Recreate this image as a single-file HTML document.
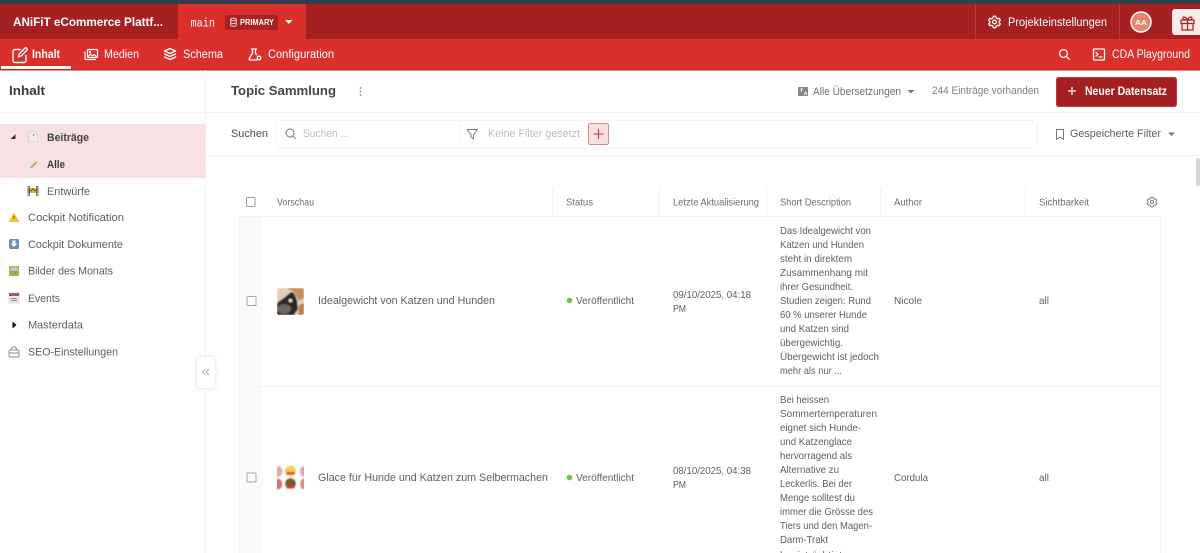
<!DOCTYPE html>
<html lang="de">
<head>
<meta charset="utf-8">
<title>Topic Sammlung</title>
<style>
html,body{margin:0;padding:0;width:1200px;height:553px;overflow:hidden;background:#fff}
svg{display:block;filter:blur(.3px)}
text{font-family:"Liberation Sans",sans-serif;font-size:11px;fill:#5e5e5e}
.w{fill:#fff;font-size:11.5px}
.b{font-weight:700}
.s{font-size:10.5px;fill:#6e6e6e}
.d{fill:#5e5e5e;font-size:10.5px}
.n{fill:#5e5e5e;font-size:11px}
.ic{fill:none;stroke:#fff;stroke-width:1.3;stroke-linecap:round;stroke-linejoin:round}
.g{fill:none;stroke:#777;stroke-width:1;stroke-linecap:round;stroke-linejoin:round}
</style>
</head>
<body>
<svg width="1200" height="553" viewBox="0 0 1200 553" xmlns="http://www.w3.org/2000/svg">
<defs>
<clipPath id="t1"><rect x="277" y="288" width="27" height="27" rx="2"/></clipPath>
<clipPath id="t2"><rect x="277" y="465" width="27" height="25"/></clipPath>
<filter id="sh" x="-50%" y="-50%" width="200%" height="200%"><feDropShadow dx="0" dy="0" stdDeviation="2" flood-color="#000" flood-opacity=".14"/></filter>
<filter id="bl"><feGaussianBlur stdDeviation=".7"/></filter>
</defs>

<!-- top bars -->
<rect width="1200" height="4" fill="#363d4b"/>
<rect y="4" width="1200" height="35" fill="#a52121"/>
<rect x="178" y="4" width="128" height="35" fill="#db2f2c"/>
<rect y="39" width="1200" height="30" fill="#db2f2c"/>
<rect y="69" width="1200" height="1.500" fill="#c62222"/>
<rect x="975" y="4" width="1" height="35" fill="#b83a38"/>
<rect x="1119" y="4" width="1" height="35" fill="#b83a38"/>
<text x="13" y="26" class="w b" style="font-size:12px" textLength="150" lengthAdjust="spacingAndGlyphs">ANiFiT eCommerce Plattf...</text>
<text x="190.500" y="26.500" style="font-family:'Liberation Mono',monospace;font-size:11.500px;fill:#fff" textLength="24.500" lengthAdjust="spacingAndGlyphs">main</text>
<rect x="225" y="15" width="53" height="15" rx="2" fill="#a82222"/>
<g fill="none" stroke="#f4d0d0" stroke-width="1"><ellipse cx="233.500" cy="19.500" rx="2.800" ry="1.200"/><path d="M230.700 19.500v5.500c0 .8 1.300 1.300 2.800 1.300s2.800-.5 2.800-1.300v-5.500M230.700 22.300c0 .8 1.300 1.300 2.800 1.300s2.800-.5 2.800-1.300"/></g>
<text x="240" y="25" class="w b" style="font-size:8px" textLength="34" lengthAdjust="spacingAndGlyphs">PRIMARY</text>
<path d="M285 20h7.500l-3.750 4z" fill="#fff"/>

<!-- nav -->
<g class="ic" style="stroke-width:1.400">
<path d="M20 49.500h-5a2 2 0 0 0-2 2v9a2 2 0 0 0 2 2h9a2 2 0 0 0 2-2v-5"/>
<path d="M18.500 56.800l.6-2.800 5.700-5.700a1.400 1.400 0 0 1 2 2l-5.600 5.700z"/>
</g>
<text x="32" y="58" class="w b" textLength="28" lengthAdjust="spacingAndGlyphs">Inhalt</text>
<rect x="1" y="66" width="70" height="3" fill="#fff"/>
<g class="ic" style="stroke-width:1.200">
<rect x="87.500" y="49.500" width="10" height="8" rx="1"/>
<path d="M85 52v6.500a1 1 0 0 0 1 1h9.500M88 57l2.500-3 2 2 1.500-1.500 3 2.500"/>
<circle cx="90" cy="52" r=".6"/>
</g>
<text x="104" y="58" class="w" textLength="35" lengthAdjust="spacingAndGlyphs">Medien</text>
<g class="ic" style="stroke-width:1.400">
<path d="M170 48.500l5.500 2.500-5.500 2.500-5.500-2.500zM164.500 54l5.500 2.500 5.500-2.500M164.500 57l5.500 2.500 5.500-2.500"/>
</g>
<text x="183" y="58" class="w" textLength="40" lengthAdjust="spacingAndGlyphs">Schema</text>
<g class="ic" style="stroke-width:1.300">
<path d="M251.500 49h5M252.500 49v4l-3.200 5.500a1 1 0 0 0 .9 1.500h6.300M255.500 49v4l1 1.800"/>
<circle cx="259" cy="58" r="1.800"/>
</g>
<text x="268" y="58" class="w" textLength="66" lengthAdjust="spacingAndGlyphs">Configuration</text>

<!-- top right -->
<g class="ic" style="stroke-width:1.300">
<circle cx="994.500" cy="22" r="1.900"/>
<path d="M993.300 16.300h2.400l.4 1.600 1.400.8 1.600-.5 1.200 2-1.200 1.200v1.200l1.200 1.200-1.200 2-1.600-.5-1.400.8-.4 1.600h-2.400l-.4-1.600-1.400-.8-1.600.5-1.200-2 1.200-1.200v-1.200l-1.200-1.200 1.200-2 1.600.5 1.400-.8z"/>
</g>
<text x="1008" y="25.800" class="w" textLength="99" lengthAdjust="spacingAndGlyphs">Projekteinstellungen</text>
<circle cx="1141" cy="22" r="10" fill="#e9846d" stroke="#fff" stroke-width="1.500"/>
<text x="1135" y="25" class="w b" style="font-size:7.500px" textLength="12" lengthAdjust="spacingAndGlyphs">AA</text>
<path d="M1200 9h-25a3 3 0 0 0-3 3v20a3 3 0 0 0 3 3h25z" fill="#fbeae8"/>
<g fill="none" stroke="#a52121" stroke-width="1.200" stroke-linejoin="round" stroke-linecap="round">
<rect x="1181" y="20" width="13" height="3.500"/>
<path d="M1182 23.500v6.500h11v-6.500M1187.500 20v10M1187.500 20c-2-4-5-3.500-4.500-1.500.2 1 2.500 1.500 4.500 1.500zM1187.500 20c2-4 5-3.500 4.500-1.500-.2 1-2.500 1.500-4.500 1.500z"/>
</g>
<g class="ic" style="stroke-width:1.300"><circle cx="1063.500" cy="53.500" r="3.900"/><path d="M1066.400 56.400l2.900 2.900"/></g>
<g class="ic" style="stroke-width:1.300"><rect x="1093.500" y="49" width="11" height="11" rx="1"/><path d="M1096 52.500l2 1.800-2 1.800M1099 57h3"/></g>
<text x="1112" y="58" class="w" textLength="78" lengthAdjust="spacingAndGlyphs">CDA Playground</text>

<!-- sidebar -->
<rect x="205" y="70" width="1" height="483" fill="#f2f2f2"/>
<text x="9" y="95" style="font-size:12.500px;font-weight:700;fill:#3a3a3a" textLength="36" lengthAdjust="spacingAndGlyphs">Inhalt</text>
<rect x="0" y="112" width="205" height="1" fill="#f4f4f4"/>
<rect x="0" y="124" width="205.500" height="54" fill="#f7e1e4"/>
<path d="M15.500 134.200v4.800h-5z" fill="#333"/>
<path d="M28.500 131.500h6l3 3v7h-9z" fill="#eeeef0" stroke="#c9c9d0" stroke-width=".6"/>
<path d="M33 134l2 1-2 1z" fill="#778"/>
<text x="47" y="140.800" class="b" style="fill:#444" textLength="42" lengthAdjust="spacingAndGlyphs">Beiträge</text>
<rect x="28.500" y="159" width="8" height="9" fill="#e3e3e3"/>
<path d="M30 167.500l6-6 1.500 1-6 5.500z" fill="#b9a83e"/>
<text x="47" y="167.800" class="b" style="fill:#3d3d3d" textLength="18" lengthAdjust="spacingAndGlyphs">Alle</text>
<g><rect x="28" y="188" width="10" height="5" fill="#d9b53a"/><path d="M28 186.500h1.500v9H28zM36.500 186.500H38v9h-1.500zM29 189l2 2 2-2 2 2 2-2" fill="none" stroke="#555" stroke-width=".8"/></g>
<text x="47" y="194.800" textLength="43" lengthAdjust="spacingAndGlyphs">Entwürfe</text>
<path d="M14 212.500l5.500 9.500h-11z" fill="#f4c430"/><path d="M14 216v3" stroke="#6b5200" stroke-width="1"/>
<text x="28" y="221" textLength="96" lengthAdjust="spacingAndGlyphs">Cockpit Notification</text>
<rect x="9" y="239" width="10" height="10" rx="1.500" fill="#6f8fb8"/><path d="M12.500 240.500h3v3h1.700L14 247l-3.200-3.500h1.700z" fill="#fff"/>
<text x="28" y="248" textLength="95" lengthAdjust="spacingAndGlyphs">Cockpit Dokumente</text>
<rect x="9" y="266" width="10" height="10" fill="#d6a737"/><rect x="10.500" y="267.500" width="7" height="3.500" fill="#a8d0e0"/><rect x="10.500" y="271" width="7" height="3.500" fill="#7fb36a"/>
<text x="28" y="274.700" textLength="85" lengthAdjust="spacingAndGlyphs">Bilder des Monats</text>
<rect x="9" y="293" width="10" height="10" fill="#ececec" stroke="#bbb" stroke-width=".5"/><rect x="9" y="293" width="10" height="3" fill="#a55a5a"/><path d="M11 298.500h6M11 300.500h6" stroke="#666" stroke-width=".8"/>
<text x="28" y="301.800" textLength="32" lengthAdjust="spacingAndGlyphs">Events</text>
<path d="M12.500 321.500l4 3.500-4 3.500z" fill="#111"/>
<text x="28" y="328.700" textLength="55" lengthAdjust="spacingAndGlyphs">Masterdata</text>
<g fill="none" stroke="#888" stroke-width=".9"><rect x="9" y="350" width="10" height="7" rx="1"/><path d="M11 350l1.500-3h3l1.500 3M9 353h10"/></g>
<text x="28" y="355.300" textLength="90" lengthAdjust="spacingAndGlyphs">SEO-Einstellungen</text>
<rect x="197" y="357" width="18" height="31" rx="3" fill="#fff" filter="url(#sh)"/>
<path d="M205.500 369l-2.800 3 2.800 3M209 369l-2.800 3 2.800 3" fill="none" stroke="#999" stroke-width=".9"/>

<!-- title row -->
<text x="231" y="95" style="font-size:12.500px;font-weight:700;fill:#444" textLength="105" lengthAdjust="spacingAndGlyphs">Topic Sammlung</text>
<g fill="#888"><circle cx="360.500" cy="88" r=".9"/><circle cx="360.500" cy="91.500" r=".9"/><circle cx="360.500" cy="95" r=".9"/></g>
<rect x="798" y="87" width="10" height="9" fill="#888"/><path d="M800 89h3M801.500 89v3M804 95l1.500-3 1.500 3" fill="none" stroke="#fff" stroke-width=".8"/>
<text x="813" y="95" class="s" style="font-size:11px" textLength="88" lengthAdjust="spacingAndGlyphs">Alle Übersetzungen</text>
<path d="M907.500 90h7l-3.500 3.500z" fill="#777"/>
<text x="932" y="94" class="s" style="font-size:11px;fill:#808080" textLength="107" lengthAdjust="spacingAndGlyphs">244 Einträge vorhanden</text>
<rect x="1056.500" y="77.500" width="120" height="29" rx="2" fill="#a51f22" stroke="#c23a3c"/>
<path d="M1072 87v8M1068 91h8" stroke="#fff" stroke-width="1.200"/>
<text x="1085" y="95" class="w b" textLength="82" lengthAdjust="spacingAndGlyphs">Neuer Datensatz</text>
<rect x="206" y="112" width="994" height="1" fill="#f2f2f2"/>

<!-- search row -->
<text x="231" y="137" style="fill:#4e4e4e" textLength="37" lengthAdjust="spacingAndGlyphs">Suchen</text>
<rect x="276.500" y="120.500" width="761" height="28" rx="3" fill="#fff" stroke="#f4f4f4"/>
<rect x="459" y="121" width="1" height="27" fill="#f4f4f4"/>
<g class="g"><circle cx="290" cy="133" r="4"/><path d="M293 136l2.800 2.800"/></g>
<text x="303" y="137" style="fill:#bdbdbd" textLength="46" lengthAdjust="spacingAndGlyphs">Suchen ...</text>
<path d="M467 129.500h10.500l-4 5v4.500l-2.500-2v-2.500z" class="g"/>
<text x="488" y="137" style="fill:#bdbdbd" textLength="92" lengthAdjust="spacingAndGlyphs">Keine Filter gesetzt</text>
<rect x="588.500" y="123.500" width="20" height="21" rx="2" fill="#f7e0e1" stroke="#d28e90"/>
<path d="M598.500 129v10M593.500 134h10" stroke="#b8393c" stroke-width="1"/>
<path d="M1056.500 129.500h7v10l-3.500-2.500-3.500 2.500z" class="g"/>
<text x="1070" y="137" textLength="91" lengthAdjust="spacingAndGlyphs">Gespeicherte Filter</text>
<path d="M1168 132.500h7l-3.500 3.500z" fill="#777"/>
<rect x="206" y="155" width="994" height="1" fill="#f4f4f4"/>
<rect x="1196" y="158" width="4" height="28" rx="2" fill="#d4d4d4"/>

<!-- table head -->
<rect x="246.500" y="197.500" width="8.500" height="9" rx="1" fill="#fff" stroke="#999"/>
<text x="277" y="205.500" class="s" textLength="37" lengthAdjust="spacingAndGlyphs">Vorschau</text>
<g fill="#f3f3f3"><rect x="552" y="188" width="1" height="28"/><rect x="659" y="188" width="1" height="28"/><rect x="766" y="188" width="1" height="28"/><rect x="880" y="188" width="1" height="28"/><rect x="1025" y="188" width="1" height="28"/></g>
<text x="566" y="205.500" class="s" textLength="27" lengthAdjust="spacingAndGlyphs">Status</text>
<text x="673" y="205.500" class="s" textLength="86" lengthAdjust="spacingAndGlyphs">Letzte Aktualisierung</text>
<text x="780" y="205.500" class="s" textLength="71" lengthAdjust="spacingAndGlyphs">Short Description</text>
<text x="894" y="205.500" class="s" textLength="28" lengthAdjust="spacingAndGlyphs">Author</text>
<text x="1039" y="205.500" class="s" textLength="50" lengthAdjust="spacingAndGlyphs">Sichtbarkeit</text>
<g class="g" style="stroke-width:.9"><circle cx="1152" cy="202" r="1.500"/><path d="M1151 197.200h2l.4 1.300 1.200.7 1.300-.4 1 1.700-1 1v1l1 1-1 1.700-1.300-.4-1.200.7-.4 1.300h-2l-.4-1.300-1.200-.7-1.300.4-1-1.700 1-1v-1l-1-1 1-1.700 1.300.4 1.200-.7z"/></g>

<!-- table body -->
<rect x="239.500" y="216.500" width="921" height="345" fill="#fff" stroke="#f2f2f2"/>
<rect x="240" y="217" width="22" height="336" fill="#fafafa"/>
<rect x="240" y="386" width="920" height="1" fill="#f4f4f4"/>

<!-- row 1 -->
<rect x="247" y="296.500" width="9" height="9" rx="1" fill="#fff" stroke="#a5a5a5"/>
<g clip-path="url(#t1)"><g filter="url(#bl)">
<rect x="277" y="288" width="27" height="27" fill="#e2d2bb"/>
<path d="M287 288h17v10l-5 3-5-9z" fill="#c58e5c"/>
<path d="M277 303l8-6 6-5 3 1 3 7 1 9-4 6h-17z" fill="#2c2826"/>
<ellipse cx="284" cy="309" rx="7" ry="5" fill="#6e665f"/>
<circle cx="290.500" cy="300.500" r="1.800" fill="#eeeae3"/>
<path d="M299 305l5-2v12h-6z" fill="#bd7f50"/>
</g></g>
<text x="318" y="304" class="n" textLength="177" lengthAdjust="spacingAndGlyphs">Idealgewicht von Katzen und Hunden</text>
<circle cx="569.500" cy="300.500" r="2.800" fill="#6cc24a"/>
<text x="576" y="304" class="s" style="fill:#5e5e5e" textLength="58" lengthAdjust="spacingAndGlyphs">Veröffentlicht</text>
<text x="673" y="298" class="d" textLength="78" lengthAdjust="spacingAndGlyphs">09/10/2025, 04:18</text>
<text x="673" y="312" class="d" textLength="13" lengthAdjust="spacingAndGlyphs">PM</text>
<text x="780" y="234" class="d" textLength="91" lengthAdjust="spacingAndGlyphs">Das Idealgewicht von</text>
<text x="780" y="248" class="d" textLength="84" lengthAdjust="spacingAndGlyphs">Katzen und Hunden</text>
<text x="780" y="262" class="d" textLength="72" lengthAdjust="spacingAndGlyphs">steht in direktem</text>
<text x="780" y="276" class="d" textLength="88" lengthAdjust="spacingAndGlyphs">Zusammenhang mit</text>
<text x="780" y="290" class="d" textLength="73" lengthAdjust="spacingAndGlyphs">ihrer Gesundheit.</text>
<text x="780" y="304" class="d" textLength="91" lengthAdjust="spacingAndGlyphs">Studien zeigen: Rund</text>
<text x="780" y="318" class="d" textLength="87" lengthAdjust="spacingAndGlyphs">60 % unserer Hunde</text>
<text x="780" y="332" class="d" textLength="69" lengthAdjust="spacingAndGlyphs">und Katzen sind</text>
<text x="780" y="346" class="d" textLength="63" lengthAdjust="spacingAndGlyphs">übergewichtig.</text>
<text x="780" y="360" class="d" textLength="99" lengthAdjust="spacingAndGlyphs">Übergewicht ist jedoch</text>
<text x="780" y="374" class="d" textLength="62" lengthAdjust="spacingAndGlyphs">mehr als nur ...</text>
<text x="894" y="304" class="d" textLength="28" lengthAdjust="spacingAndGlyphs">Nicole</text>
<text x="1039" y="304" class="d" textLength="10" lengthAdjust="spacingAndGlyphs">all</text>

<!-- row 2 -->
<rect x="247" y="473" width="9" height="9" rx="1" fill="#fff" stroke="#a5a5a5"/>
<g clip-path="url(#t2)"><g filter="url(#bl)">
<rect x="277" y="465" width="27" height="25" fill="#fff"/>
<ellipse cx="278" cy="471.500" rx="4.500" ry="5.500" fill="#e7a6a6"/>
<ellipse cx="278" cy="484" rx="4.500" ry="5.500" fill="#d96e70"/>
<circle cx="290.500" cy="471" r="5.500" fill="#efce4b"/>
<rect x="286" y="472" width="9" height="2.500" fill="#d8434a"/>
<circle cx="290.500" cy="483.500" r="5.500" fill="#7a5a2c"/>
<rect x="286" y="486" width="9" height="2.500" fill="#c83a40"/>
<ellipse cx="303.500" cy="471.500" rx="3.500" ry="5.500" fill="#e6a2a2"/>
<ellipse cx="303.500" cy="484" rx="3.500" ry="5.500" fill="#d98a8a"/>
</g></g>
<text x="318" y="481" class="n" textLength="230" lengthAdjust="spacingAndGlyphs">Glace für Hunde und Katzen zum Selbermachen</text>
<circle cx="569.500" cy="477.500" r="2.800" fill="#6cc24a"/>
<text x="576" y="481" class="s" style="fill:#5e5e5e" textLength="58" lengthAdjust="spacingAndGlyphs">Veröffentlicht</text>
<text x="673" y="474" class="d" textLength="78" lengthAdjust="spacingAndGlyphs">08/10/2025, 04:38</text>
<text x="673" y="488" class="d" textLength="13" lengthAdjust="spacingAndGlyphs">PM</text>
<text x="780" y="403" class="d" textLength="49" lengthAdjust="spacingAndGlyphs">Bei heissen</text>
<text x="780" y="417" class="d" textLength="97" lengthAdjust="spacingAndGlyphs">Sommertemperaturen</text>
<text x="780" y="431" class="d" textLength="81" lengthAdjust="spacingAndGlyphs">eignet sich Hunde-</text>
<text x="780" y="445" class="d" textLength="72" lengthAdjust="spacingAndGlyphs">und Katzenglace</text>
<text x="780" y="459" class="d" textLength="72" lengthAdjust="spacingAndGlyphs">hervorragend als</text>
<text x="780" y="473" class="d" textLength="59" lengthAdjust="spacingAndGlyphs">Alternative zu</text>
<text x="780" y="487" class="d" textLength="72" lengthAdjust="spacingAndGlyphs">Leckerlis. Bei der</text>
<text x="780" y="501" class="d" textLength="75" lengthAdjust="spacingAndGlyphs">Menge solltest du</text>
<text x="780" y="515" class="d" textLength="93" lengthAdjust="spacingAndGlyphs">immer die Grösse des</text>
<text x="780" y="529" class="d" textLength="92" lengthAdjust="spacingAndGlyphs">Tiers und den Magen-</text>
<text x="780" y="543" class="d" textLength="48" lengthAdjust="spacingAndGlyphs">Darm-Trakt</text>
<text x="780" y="558.500" class="d" textLength="62" lengthAdjust="spacingAndGlyphs">beeinträchtigt</text>
<text x="894" y="481" class="d" textLength="34" lengthAdjust="spacingAndGlyphs">Cordula</text>
<text x="1039" y="481" class="d" textLength="10" lengthAdjust="spacingAndGlyphs">all</text>
</svg>
</body>
</html>
